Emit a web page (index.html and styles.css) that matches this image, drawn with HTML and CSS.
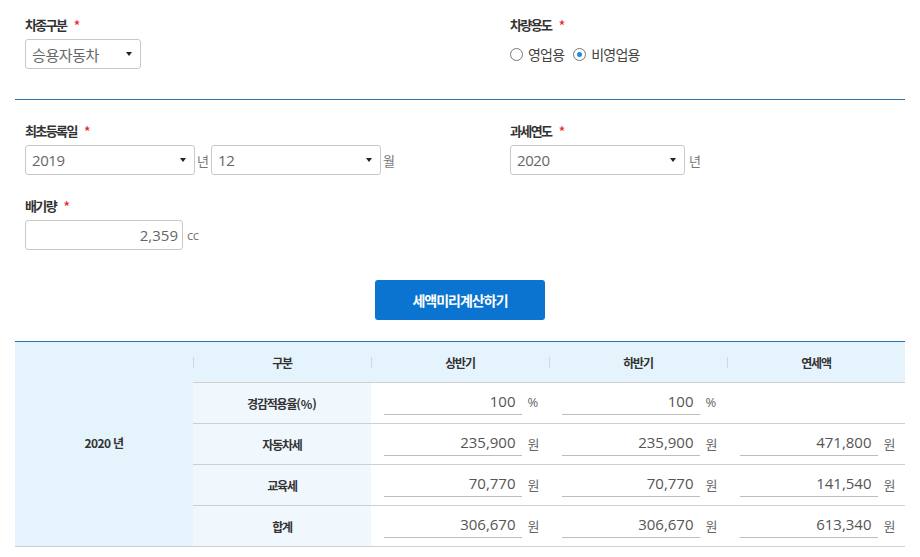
FILE: index.html
```html
<!DOCTYPE html>
<html lang="ko">
<head>
<meta charset="utf-8">
<title>자동차세 계산</title>
<link rel="stylesheet" href="styles.css">
</head>
<body>
<div class="page">
  <div class="sec sec-top">
    <div class="cols">
      <div class="field">
        <div class="label">차종구분 <span class="req">*</span></div>
        <div class="ctrl-row">
          <div class="select w116"><span>승용자동차</span></div>
        </div>
      </div>
      <div class="field">
        <div class="label">차량용도 <span class="req">*</span></div>
        <div class="ctrl-row radios">
          <label class="radio"><span class="dot"></span>영업용</label>
          <label class="radio"><span class="dot on"></span>비영업용</label>
        </div>
      </div>
    </div>
  </div>
  <div class="divider"></div>
  <div class="sec sec-mid">
    <div class="cols">
      <div class="field">
        <div class="label">최초등록일 <span class="req">*</span></div>
        <div class="ctrl-row">
          <div class="select w170"><span>2019</span></div>
          <span class="unit">년</span>
          <div class="select w170"><span>12</span></div>
          <span class="unit">월</span>
        </div>
      </div>
      <div class="field">
        <div class="label">과세연도 <span class="req">*</span></div>
        <div class="ctrl-row">
          <div class="select w175"><span>2020</span></div>
          <span class="unit u2">년</span>
        </div>
      </div>
    </div>
    <div class="field field-cc">
      <div class="label">배기량 <span class="req">*</span></div>
      <div class="ctrl-row">
        <div class="input w158">2,359</div>
        <span class="unit u3">cc</span>
      </div>
    </div>
  </div>
  <div class="btn-wrap">
    <button class="btn" type="button">세액미리계산하기</button>
  </div>
  <table class="result">
    <tr class="head">
      <td class="year" rowspan="5">2020 년</td>
      <th class="sep">구분</th>
      <th class="sep">상반기</th>
      <th class="sep">하반기</th>
      <th class="sep">연세액</th>
    </tr>
    <tr>
      <th class="rlabel">경감적용율<span class="paren">(%)</span></th>
      <td><div class="val"><span class="num">100</span><span class="vu">%</span></div></td>
      <td><div class="val"><span class="num">100</span><span class="vu">%</span></div></td>
      <td></td>
    </tr>
    <tr>
      <th class="rlabel">자동차세</th>
      <td><div class="val"><span class="num">235,900</span><span class="vu">원</span></div></td>
      <td><div class="val"><span class="num">235,900</span><span class="vu">원</span></div></td>
      <td><div class="val"><span class="num">471,800</span><span class="vu">원</span></div></td>
    </tr>
    <tr>
      <th class="rlabel">교육세</th>
      <td><div class="val"><span class="num">70,770</span><span class="vu">원</span></div></td>
      <td><div class="val"><span class="num">70,770</span><span class="vu">원</span></div></td>
      <td><div class="val"><span class="num">141,540</span><span class="vu">원</span></div></td>
    </tr>
    <tr>
      <th class="rlabel">합계</th>
      <td><div class="val"><span class="num">306,670</span><span class="vu">원</span></div></td>
      <td><div class="val"><span class="num">306,670</span><span class="vu">원</span></div></td>
      <td><div class="val"><span class="num">613,340</span><span class="vu">원</span></div></td>
    </tr>
  </table>
</div>
</body>
</html>
```
FILE: styles.css
```css
* { box-sizing: border-box; }
html, body { margin: 0; padding: 0; background: #fff; }
body {
  font-family: "Open Sans", "Noto Sans CJK KR", sans-serif;
  color: #333;
}
.page { padding: 0 15px; width: 920px; }

.sec { padding-left: 10px; }
.sec-top { padding-top: 15px; padding-bottom: 30px; }
.sec-mid { padding-top: 21px; }

.cols { display: grid; grid-template-columns: 485px 1fr; }

.label {
  font-family: "Noto Sans CJK KR", sans-serif;
  font-size: 13px;
  font-weight: 700;
  letter-spacing: -1.6px;
  line-height: 18px;
  height: 18px;
  color: #333;
  margin-bottom: 6px;
}
.req { color: #e8262a; font-weight: 400; margin-left: 5px; font-size: 15px; letter-spacing: 0; position: relative; top: 2px; }

.ctrl-row { display: flex; align-items: center; height: 30px; }

.select {
  height: 30px;
  border: 1px solid #c8c8c8;
  border-radius: 3px;
  display: flex;
  align-items: center;
  justify-content: space-between;
  padding: 0 8px 0 6px;
  font-family: "Open Sans", "Noto Sans CJK KR", sans-serif;
  font-size: 15px;
  color: #666;
  background: #fff;
}
.select span { letter-spacing: -0.4px; }
.select::after {
  content: "";
  border-left: 3px solid transparent;
  border-right: 3px solid transparent;
  border-top: 4px solid #222;
}
.w116 { width: 116px; }
.w170 { width: 170px; }
.w175 { width: 175px; }
.w158 { width: 158px; }

.unit {
  font-family: "Noto Sans CJK KR", sans-serif;
  font-size: 13px;
  color: #777;
  margin: 0 2px 0 2px;
}
.u2 { margin-left: 4px; }
.u3 { margin-left: 4px; font-family: "Open Sans", sans-serif; letter-spacing: -0.5px; }

.input {
  height: 30px;
  border: 1px solid #c8c8c8;
  border-radius: 3px;
  text-align: right;
  padding: 0 4px 0 7px;
  font-size: 15px;
  line-height: 28px;
  color: #666;
}

.field-cc { margin-top: 21px; }

.radios { gap: 0; }
.radio {
  display: flex;
  align-items: center;
  font-family: "Noto Sans CJK KR", sans-serif;
  font-size: 14px;
  color: #444;
  letter-spacing: -0.8px;
  margin-right: 9px;
}
.dot {
  width: 13px;
  height: 13px;
  border: 1px solid #777;
  border-radius: 50%;
  margin-right: 5px;
  display: flex;
  align-items: center;
  justify-content: center;
}
.dot.on::after {
  content: "";
  width: 5px;
  height: 5px;
  border-radius: 50%;
  background: #1a8ae8;
}

.divider { height: 1px; background: #2a74ab; }

.btn-wrap { display: flex; justify-content: center; padding-top: 30px; padding-bottom: 21px; }
.btn {
  width: 170px;
  height: 40px;
  border: 0;
  border-radius: 3px;
  background: #0a74d0;
  color: #fff;
  font-family: "Noto Sans CJK KR", sans-serif;
  font-size: 14px;
  font-weight: 700;
  letter-spacing: -1px;
  padding: 0;
}

.result {
  width: 890px;
  border-collapse: collapse;
  table-layout: fixed;
  border-top: 1px solid #2a74ab;
  border-bottom: 1px solid #cfcfcf;
}
.result td, .result th {
  width: 178px;
  padding: 0;
  height: 41px;
  border-bottom: 1px solid #cfcfcf;
  font-family: "Noto Sans CJK KR", sans-serif;
  text-align: center;
  vertical-align: middle;
}
.result .head th {
  height: 41px;
  background: #e5f3fd linear-gradient(#d0d8df, #d0d8df) left center / 1px 11px no-repeat;
  font-size: 12px;
  font-weight: 700;
  letter-spacing: -1.2px;
  color: #333;
}
.result .year {
  background: #e5f3fd;
  font-size: 12px;
  font-weight: 700;
  color: #333;
  letter-spacing: -0.6px;
  border-bottom: 1px solid #cfcfcf;
  padding-bottom: 3px;
}
.result .rlabel {
  background: #f0f8fe;
  font-size: 12px;
  font-weight: 700;
  letter-spacing: -1.2px;
  color: #333;
}
.paren { letter-spacing: 0; }
.val {
  display: flex;
  align-items: center;
  justify-content: center;
  gap: 6px;
  padding-left: 1px;
  padding-bottom: 2px;
}
.num {
  width: 138px;
  height: 25px;
  border-bottom: 1px solid #bdbdbd;
  text-align: right;
  padding-right: 6px;
  font-family: "Open Sans", sans-serif;
  font-size: 15px;
  line-height: 23px;
  color: #555;
}
.vu {
  font-family: "Open Sans", "Noto Sans CJK KR", sans-serif;
  font-size: 13px;
  color: #666;
  width: 10px;
  text-align: left;
}
```
